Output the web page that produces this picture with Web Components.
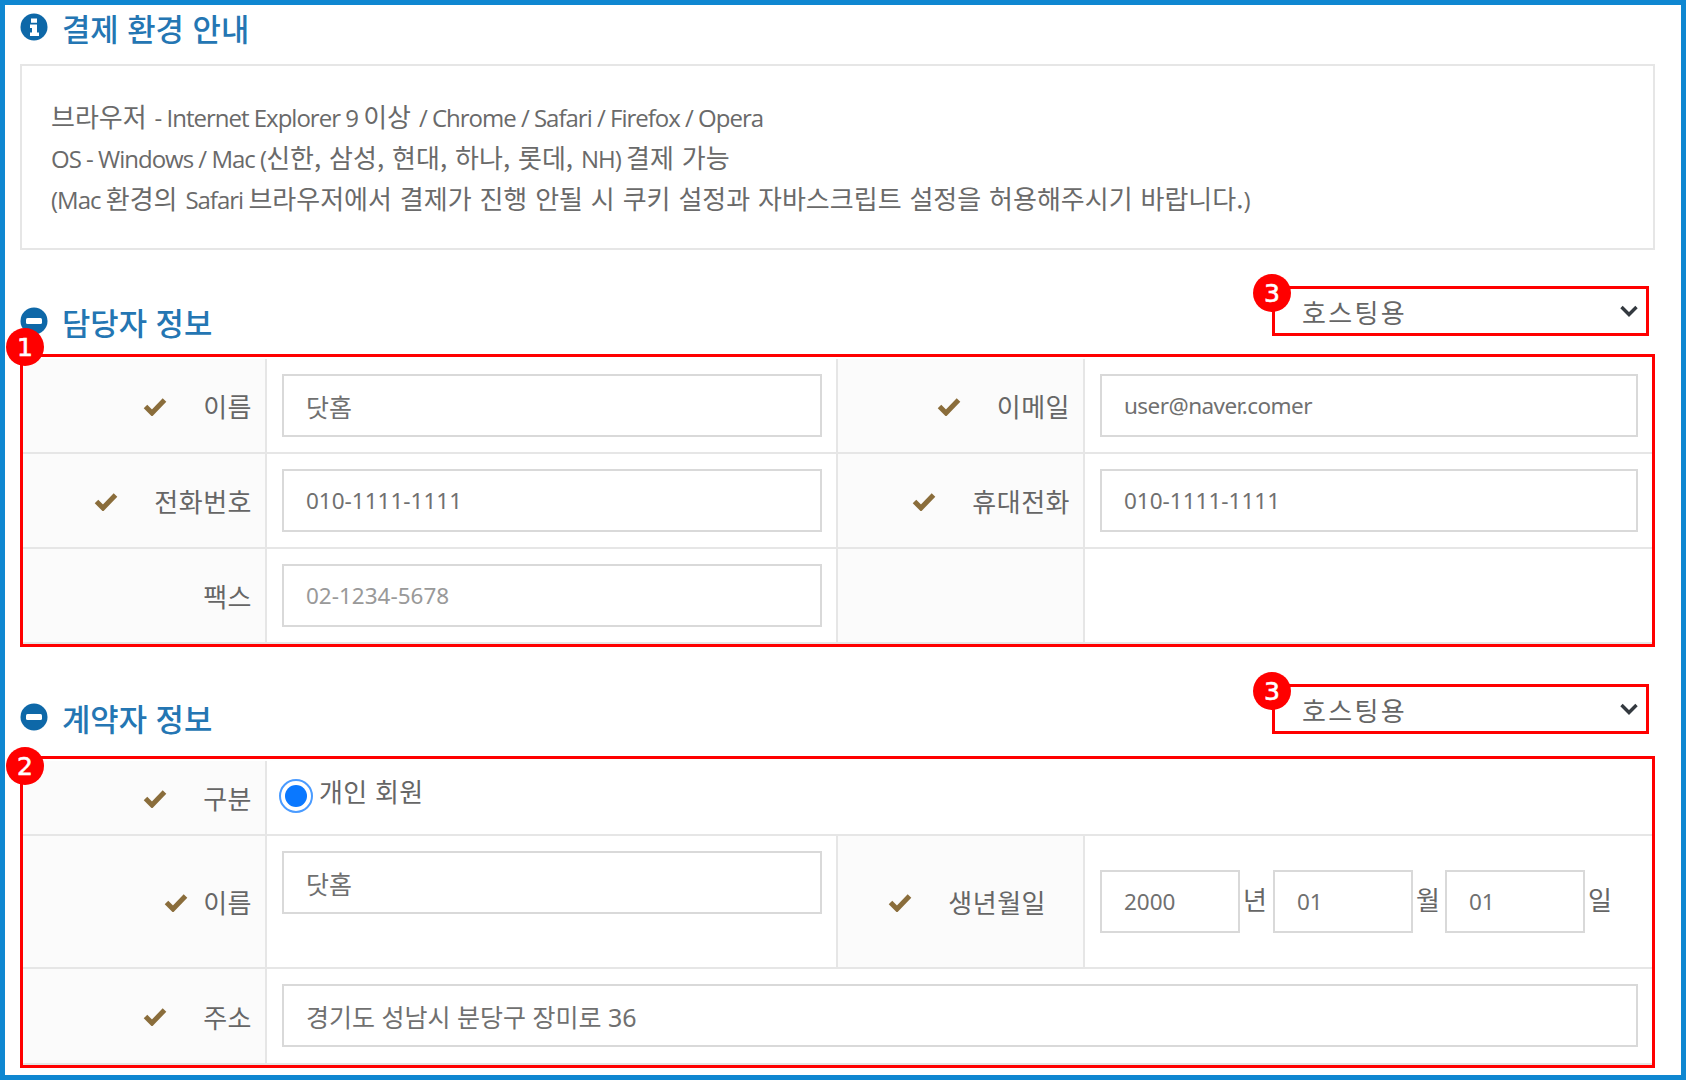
<!DOCTYPE html>
<html lang="ko">
<head>
<meta charset="utf-8">
<title>결제 환경 안내</title>
<style>
  html, body { margin: 0; padding: 0; background: #fff; }
  body { font-family: "Noto Sans CJK KR", "Noto Sans", sans-serif; color: #666; }
</style>
</head>
<body>
<app-frame>
  <section-head icon="info" title-text="결제 환경 안내"></section-head>
  <info-box>
    <div>브라우저 <en-text>- Internet Explorer 9 </en-text>이상 <en-text>/ Chrome / Safari / Firefox / Opera</en-text></div>
    <div><en-text>OS - Windows / Mac (</en-text>신한, 삼성, 현대, 하나, 롯데, <en-text>NH) </en-text>결제 가능</div>
    <div><en-text>(Mac </en-text>환경의 <en-text>Safari </en-text>브라우저에서 결제가 진행 안될 시 쿠키 설정과 자바스크립트 설정을 허용해주시기 바랍니다.<en-text>)</en-text></div>
  </info-box>

  <section-head icon="minus" title-text="담당자 정보" style="--top:36px;--gap:18px;--title-top:11px">
    <select-box slot="side" value="호스팅용"></select-box>
  </section-head>
  <form-table num="1" style="--badge-top:-29px">
    <form-row>
      <form-label check>이름</form-label>
      <form-cell><text-box>닷홈</text-box></form-cell>
      <form-label check>이메일</form-label>
      <form-cell><text-box en style="letter-spacing:-0.55px">user@naver.comer</text-box></form-cell>
    </form-row>
    <form-row>
      <form-label check>전화번호</form-label>
      <form-cell><text-box en>010-1111-1111</text-box></form-cell>
      <form-label check>휴대전화</form-label>
      <form-cell><text-box en>010-1111-1111</text-box></form-cell>
    </form-row>
    <form-row>
      <form-label>팩스</form-label>
      <form-cell><text-box en placeholder>02-1234-5678</text-box></form-cell>
      <form-label></form-label>
      <form-cell></form-cell>
    </form-row>
  </form-table>

  <section-head icon="minus" title-text="계약자 정보" style="--top:37px;--gap:22px;--title-top:9px">
    <select-box slot="side" value="호스팅용"></select-box>
  </section-head>
  <form-table num="2" style="--badge-top:-12px">
    <form-row wide>
      <form-label check>구분</form-label>
      <form-cell radio><radio-option>개인 회원</radio-option></form-cell>
    </form-row>
    <form-row>
      <form-label check near>이름</form-label>
      <form-cell style="padding-bottom:53px"><text-box>닷홈</text-box></form-cell>
      <form-label check style="padding-right:37px">생년월일</form-label>
      <form-cell>
        <date-field>
          <text-box en>2000</text-box><span>년</span>
          <text-box en>01</text-box><span>월</span>
          <text-box en>01</text-box><span>일</span>
        </date-field>
      </form-cell>
    </form-row>
    <form-row wide>
      <form-label check>주소</form-label>
      <form-cell style="padding-bottom:16px"><text-box>경기도 성남시 분당구 장미로 36</text-box></form-cell>
    </form-row>
  </form-table>
</app-frame>

<script>
class AppFrame extends HTMLElement {
  constructor() {
    super();
    this.attachShadow({ mode: 'open' });
  }
  connectedCallback() {
    this.shadowRoot.innerHTML = `
      <style>
        :host {
          display: block;
          box-sizing: border-box;
          width: 1686px;
          height: 1080px;
          border: 5px solid #0f87d1;
          padding: 0 26px 0 15px;
          overflow: hidden;
          background: #fff;
        }
      </style>
      <slot></slot>
    `;
  }
}

class SectionHead extends HTMLElement {
  constructor() {
    super();
    this.attachShadow({ mode: 'open' });
  }
  connectedCallback() {
    const isInfo = this.getAttribute('icon') === 'info';
    const icon = isInfo
      ? `<svg viewBox="0 0 28 28" width="28" height="28"><circle cx="14" cy="14" r="13.5" fill="#0e68a8"/><path d="M11 5.5h6v4.2h-6zM10 11.5h7v8h2v3.6h-9v-3.6h2v-4.4h-2z" fill="#fff"/></svg>`
      : `<svg viewBox="0 0 28 28" width="28" height="28"><circle cx="14" cy="14" r="13.5" fill="#0e68a8"/><rect x="6" y="11" width="16" height="6" rx="1.5" fill="#fff"/></svg>`;
    this.shadowRoot.innerHTML = `
      <style>
        :host {
          display: flex;
          justify-content: space-between;
          align-items: flex-start;
          margin-top: var(--top, 0);
          margin-bottom: var(--gap, 0);
        }
        .title {
          display: flex;
          align-items: center;
          gap: 14px;
          height: ${isInfo ? 44 : 48}px;
          margin-top: var(--title-top, 0);
          margin-bottom: ${isInfo ? '15px' : 'calc(-1 * var(--title-top, 0))'};
          font-family: "Noto Sans CJK KR", sans-serif;
          font-size: 30.8px;
          font-weight: 500;
          color: #2476b3;
        }
        svg { display: block; flex: none; }
        .side { display: block; margin-right: 6px; }
      </style>
      <div class="title">${icon}<span>${this.getAttribute('title-text')}</span></div>
      <slot class="side" name="side"></slot>
    `;
  }
}

class InfoBox extends HTMLElement {
  constructor() {
    super();
    this.attachShadow({ mode: 'open' });
  }
  connectedCallback() {
    this.shadowRoot.innerHTML = `
      <style>
        :host {
          display: block;
          box-sizing: border-box;
          border: 2px solid #e6e6e6;
          padding: 29px 29px 30px 29px;
          font-family: "Noto Sans CJK KR", sans-serif;
          font-size: 26px;
          line-height: 41px;
          word-spacing: 0.6px;
          color: #6a6a6a;
          white-space: nowrap;
        }
      </style>
      <slot></slot>
    `;
  }
}

class EnText extends HTMLElement {
  constructor() {
    super();
    this.attachShadow({ mode: 'open' });
  }
  connectedCallback() {
    // no whitespace around the slot: this host is inline and would show it as a gap
    this.shadowRoot.innerHTML = `<style>
        :host {
          display: inline;
          font-family: "Open Sans", sans-serif;
          font-size: 24px;
          line-height: 1;
          letter-spacing: -1px;
          word-spacing: 0;
        }
      </style><slot></slot>`;
  }
}

class FormTable extends HTMLElement {
  constructor() {
    super();
    this.attachShadow({ mode: 'open' });
  }
  connectedCallback() {
    this.shadowRoot.innerHTML = `
      <style>
        :host {
          display: block;
          position: relative;
          border: 3px solid #f00;
          padding-top: 2px;
        }
        num-badge { left: -17px; top: var(--badge-top, -29px); }
      </style>
      <num-badge>${this.getAttribute('num')}</num-badge>
      <slot></slot>
    `;
  }
}

class FormRow extends HTMLElement {
  constructor() {
    super();
    this.attachShadow({ mode: 'open' });
  }
  connectedCallback() {
    const cols = this.hasAttribute('wide') ? '244px 1fr' : '244px 571px 247px 1fr';
    this.shadowRoot.innerHTML = `
      <style>
        :host {
          display: grid;
          grid-template-columns: ${cols};
          border-bottom: 2px solid #e6e6e6;
        }
      </style>
      <slot></slot>
    `;
  }
}

class FormLabel extends HTMLElement {
  constructor() {
    super();
    this.attachShadow({ mode: 'open' });
  }
  connectedCallback() {
    const gap = this.hasAttribute('near') ? 15 : 36;
    const check = this.hasAttribute('check')
      ? `<svg viewBox="0 0 24 20" width="24" height="20" style="margin-right:${gap}px"><path d="M2.5 10.5 9 17 21.5 4" fill="none" stroke="#8a6d3b" stroke-width="5"/></svg>`
      : '';
    this.shadowRoot.innerHTML = `
      <style>
        :host {
          display: flex;
          align-items: center;
          justify-content: flex-end;
          box-sizing: border-box;
          padding-right: 13px;
          background: #fbfbfb;
          border-right: 2px solid #e6e6e6;
          font-family: "Noto Sans CJK KR", sans-serif;
          font-size: 26px;
          letter-spacing: 0.5px;
          color: #666;
        }
        svg { display: block; flex: none; }
      </style>
      ${check}<slot></slot>
    `;
  }
}

class FormCell extends HTMLElement {
  constructor() {
    super();
    this.attachShadow({ mode: 'open' });
  }
  connectedCallback() {
    const radio = this.hasAttribute('radio');
    this.shadowRoot.innerHTML = `
      <style>
        :host {
          display: block;
          box-sizing: border-box;
          min-height: ${radio ? 73 : 93}px;
          padding: ${radio ? '15px 12px' : '15px 14px 15px 15px'};
        }
        :host(:not(:last-child)) { border-right: 2px solid #e6e6e6; }
      </style>
      <slot></slot>
    `;
  }
}

class TextBox extends HTMLElement {
  constructor() {
    super();
    this.attachShadow({ mode: 'open' });
  }
  connectedCallback() {
    const en = this.hasAttribute('en');
    this.shadowRoot.innerHTML = `
      <style>
        :host {
          display: flex;
          align-items: center;
          box-sizing: border-box;
          height: 63px;
          padding-left: 22px;
          border: 2px solid #d9d9d9;
          background: #fff;
          font-family: "Noto Sans", "Noto Sans CJK KR", sans-serif;
          font-size: ${en ? 22.5 : 25}px;
          color: ${this.hasAttribute('placeholder') ? '#999' : '#707070'};
          white-space: nowrap;
        }
      </style>
      <slot></slot>
    `;
  }
}

class SelectBox extends HTMLElement {
  constructor() {
    super();
    this.attachShadow({ mode: 'open' });
  }
  connectedCallback() {
    this.shadowRoot.innerHTML = `
      <style>
        :host {
          display: flex;
          align-items: center;
          justify-content: space-between;
          position: relative;
          box-sizing: border-box;
          width: 377px;
          height: 50px;
          padding: 0 8px 0 27px;
          border: 3px solid #f00;
          background: #fff;
          font-family: "Noto Sans CJK KR", sans-serif;
          font-size: 26px;
          letter-spacing: 2.3px;
          color: #666;
        }
        num-badge { left: -22px; top: -15px; }
        svg { display: block; }
      </style>
      <num-badge>3</num-badge>
      <span>${this.getAttribute('value')}</span>
      <svg viewBox="0 0 18 12" width="18" height="12"><path d="M1.5 2 9 9.5 16.5 2" fill="none" stroke="#343a40" stroke-width="3.4"/></svg>
    `;
  }
}

class NumBadge extends HTMLElement {
  constructor() {
    super();
    this.attachShadow({ mode: 'open' });
  }
  connectedCallback() {
    this.shadowRoot.innerHTML = `
      <style>
        :host {
          position: absolute;
          display: flex;
          align-items: center;
          justify-content: center;
          width: 38px;
          height: 38px;
          border-radius: 50%;
          background: #f00;
          color: #fff;
          -webkit-text-stroke: 0.6px #fff;
          font-family: "DejaVu Sans", sans-serif;
          font-size: 25px;
          font-weight: 400;
          letter-spacing: 0;
          z-index: 2;
        }
      </style>
      <slot></slot>
    `;
  }
}

class RadioOption extends HTMLElement {
  constructor() {
    super();
    this.attachShadow({ mode: 'open' });
  }
  connectedCallback() {
    this.shadowRoot.innerHTML = `
      <style>
        :host {
          display: flex;
          align-items: flex-start;
          gap: 6px;
          font-family: "Noto Sans CJK KR", sans-serif;
          font-size: 26px;
          letter-spacing: 0.3px;
          line-height: 30px;
          color: #666;
        }
        .dot {
          box-sizing: border-box;
          flex: none;
          width: 34px;
          height: 34px;
          margin-top: 3px;
          border: 2px solid #4a9bff;
          border-radius: 50%;
          background: #0a78ff;
          background-clip: content-box;
          padding: 4px;
        }
      </style>
      <span class="dot"></span><span><slot></slot></span>
    `;
  }
}

class DateField extends HTMLElement {
  constructor() {
    super();
    this.attachShadow({ mode: 'open' });
  }
  connectedCallback() {
    this.shadowRoot.innerHTML = `
      <style>
        :host {
          display: grid;
          grid-template-columns: 140px 33px 140px 32px 140px 1fr;
          align-items: center;
          margin-top: 19px;
          font-family: "Noto Sans CJK KR", sans-serif;
          font-size: 26px;
          color: #666;
        }
        ::slotted(span) { padding: 0 0 6px 3px; }
      </style>
      <slot></slot>
    `;
  }
}

customElements.define('app-frame', AppFrame);
customElements.define('section-head', SectionHead);
customElements.define('info-box', InfoBox);
customElements.define('en-text', EnText);
customElements.define('form-table', FormTable);
customElements.define('form-row', FormRow);
customElements.define('form-label', FormLabel);
customElements.define('form-cell', FormCell);
customElements.define('text-box', TextBox);
customElements.define('select-box', SelectBox);
customElements.define('num-badge', NumBadge);
customElements.define('radio-option', RadioOption);
customElements.define('date-field', DateField);
</script>
</body>
</html>
